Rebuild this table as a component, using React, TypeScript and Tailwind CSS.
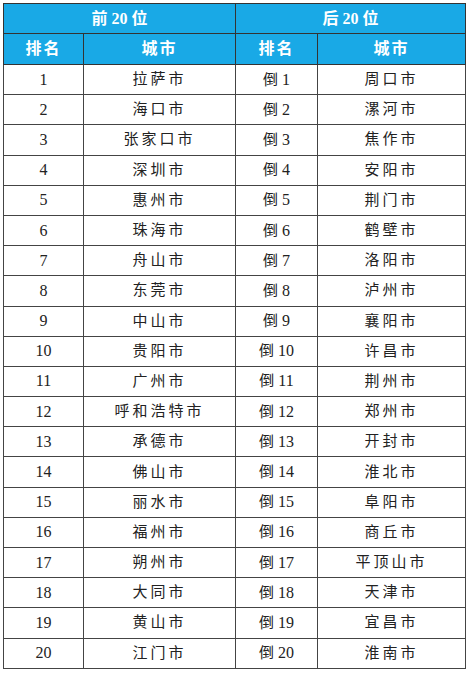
const top = ['拉萨市', '海口市', '张家口市', '深圳市', '惠州市', '珠海市', '舟山市', '东莞市', '中山市', '贵阳市', '广州市', '呼和浩特市', '承德市', '佛山市', '丽水市', '福州市', '朔州市', '大同市', '黄山市', '江门市']
const bottom = ['周口市', '漯河市', '焦作市', '安阳市', '荆门市', '鹤壁市', '洛阳市', '泸州市', '襄阳市', '许昌市', '荆州市', '郑州市', '开封市', '淮北市', '阜阳市', '商丘市', '平顶山市', '天津市', '宜昌市', '淮南市']

const font = { fontFamily: '"Liberation Serif", "Noto Sans CJK SC", serif' }

export default function App() {
  return (
    <div className="bg-white w-[471px] h-[675px] pt-[3px] pl-[3px]" style={font}>
      <table className="border-collapse w-[462px] table-fixed text-[15px] text-[#222] leading-none">
        <colgroup>
          <col className="w-[80px]" />
          <col className="w-[152px]" />
          <col className="w-[82px]" />
          <col className="w-[148px]" />
        </colgroup>
        <thead>
          <tr className="h-[30px] bg-[#19a9e6] text-white font-bold text-[16px]">
            <th colSpan={2} className="border border-[#333] font-bold">前 20 位</th>
            <th colSpan={2} className="border border-[#333] font-bold">后 20 位</th>
          </tr>
          <tr className="h-[31px] bg-[#19a9e6] text-white text-[16px]">
            <th className="border border-[#333] font-bold tracking-[2px]">排名</th>
            <th className="border border-[#333] font-bold tracking-[2px]">城市</th>
            <th className="border border-[#333] font-bold tracking-[2px]">排名</th>
            <th className="border border-[#333] font-bold tracking-[2px]">城市</th>
          </tr>
        </thead>
        <tbody>
          {top.map((city, i) => (
            <tr key={i} className="h-[30.2px]">
              <td className="border border-[#444] text-center text-[16px]">{i + 1}</td>
              <td className="border border-[#444] text-center tracking-[3px]">{city}</td>
              <td className="border border-[#444] text-center text-[16px]">
                <span className="text-[15px]">倒</span> {i + 1}
              </td>
              <td className="border border-[#444] text-center tracking-[3px]">{bottom[i]}</td>
            </tr>
          ))}
        </tbody>
      </table>
    </div>
  )
}
